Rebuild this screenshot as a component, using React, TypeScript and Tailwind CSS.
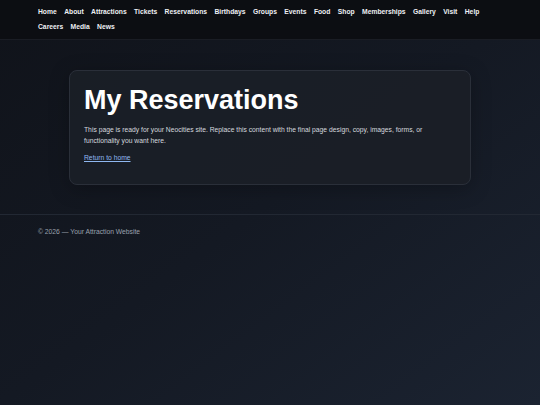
const navItems = [
  'Home', 'About', 'Attractions', 'Tickets', 'Reservations', 'Birthdays', 'Groups', 'Events',
  'Food', 'Shop', 'Memberships', 'Gallery', 'Visit', 'Help', 'Careers', 'Media', 'News',
];

const App = () => {
  return (
    <div
      className="min-h-[405px] bg-gradient-to-br from-[#10131a] via-[#141923] to-[#1b2331] text-white"
      style={{ fontFamily: '"Liberation Sans", Arial, sans-serif' }}
    >
      <header className="bg-[#0c0e12] border-b border-[#1a1d24] px-[38px] pt-[4px] pb-[5px]">
        <nav className="flex flex-wrap gap-x-[7.4px] max-w-[452px]">
          {navItems.map((item) => (
            <a key={item} href="#" className="text-[6.75px] leading-[15px] font-bold text-[#eef0f4]">
              {item}
            </a>
          ))}
        </nav>
      </header>

      <main className="px-[69px] pt-[30px] pb-[29px]">
        <section className="rounded-[8px] border border-[#2a2f39] bg-[#1b1f27]/90 px-[14px] pt-[15px] pb-[21px] shadow-[0_4px_20px_rgba(0,0,0,0.25)]">
          <h1 className="text-[27px] leading-[1.1] font-bold text-white">My Reservations</h1>
          <p className="mt-[8px] text-[6.75px] leading-[11.4px] text-[#d5d8de]">
            This page is ready for your Neocities site. Replace this content with the final page design, copy, images, forms, or functionality you want here.
          </p>
          <p className="mt-[5px] text-[6.75px] leading-[11.4px]">
            <a href="#" className="text-[#8fb8f0] underline">
              Return to home
            </a>
          </p>
        </section>
      </main>

      <footer className="border-t border-[#222833] px-[38px] pt-[11px] pb-[20px]">
        <p className="text-[6.75px] leading-[11px] text-[#9aa1ad]">© 2026 — Your Attraction Website</p>
      </footer>
    </div>
  );
};

export default App;
